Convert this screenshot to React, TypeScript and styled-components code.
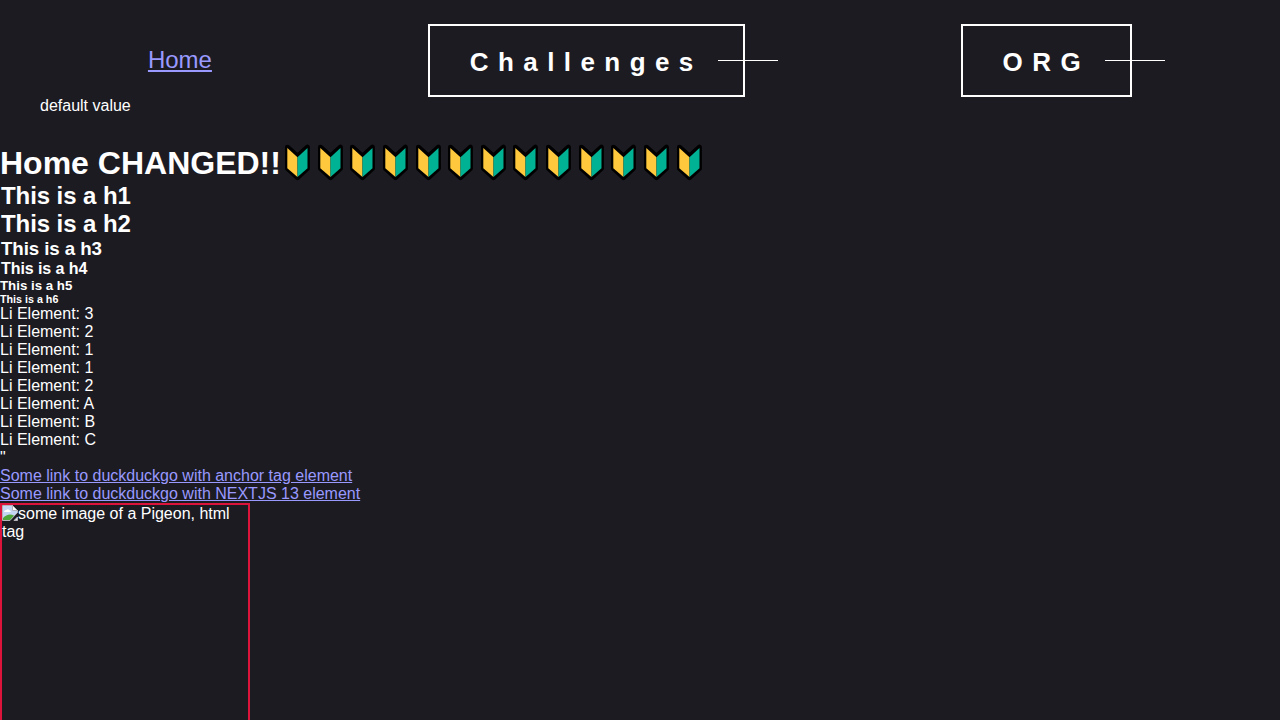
import React from "react";
import styled, { createGlobalStyle } from "styled-components";

const GlobalStyle = createGlobalStyle`
  * { box-sizing: border-box; margin: 0; padding: 0; }
  html, body { height: 100%; overflow: hidden; }
  body {
    background: #1c1b22;
    color: #fff;
    font-family: "Liberation Sans", Arial, sans-serif;
    font-size: 16px;
    line-height: 18px;
  }
`;

const Nav = styled.nav`
  display: flex;
  justify-content: space-around;
  align-items: center;
  padding: 24px 40px 0;
`;

const Link = styled.a<{ $large?: boolean }>`
  color: #9999ff;
  text-decoration: underline;
  font-size: ${(p) => (p.$large ? "24px" : "16px")};
  line-height: ${(p) => (p.$large ? "27px" : "18px")};
  padding-bottom: ${(p) => (p.$large ? "2px" : "0")};
`;

const NavBox = styled.div`
  position: relative;
  border: 2px solid #fff;
  padding: 22px 40px 18px;
  font-size: 26px;
  line-height: 29px;
  font-weight: 700;
  letter-spacing: 9.42px;

  &::after {
    content: "";
    position: absolute;
    top: 34px;
    right: -35px;
    width: 60px;
    height: 1px;
    background: #fff;
  }
`;

const ContextValue = styled.p`
  padding-left: 40px;
`;

const Title = styled.h1`
  display: flex;
  align-items: center;
  height: 37px;
  margin-top: 30px;
  font-size: 32px;
  line-height: 37px;
`;

const Badges = styled.span`
  display: flex;
  padding-left: 2px;
`;

const BadgeIcon = styled.svg`
  display: block;
  flex: none;
  width: 32.67px;
  height: 37px;
  overflow: visible;
`;

const Heading = styled.div<{ $size: number; $line: number; $indent: number; $gap: number; $track: number }>`
  font-weight: 700;
  font-size: ${(p) => p.$size}px;
  line-height: ${(p) => p.$line}px;
  padding-left: ${(p) => p.$indent}px;
  margin-bottom: ${(p) => p.$gap}px;
  letter-spacing: ${(p) => p.$track}px;
`;

const List = styled.ul`
  list-style: none;
`;

const Links = styled.div`
  display: flex;
  flex-direction: column;
  align-items: flex-start;
`;

const MissingImage = styled.div`
  width: 250px;
  height: 250px;
  border: 2px solid crimson;
`;

const BrokenIcon = styled.svg`
  width: 16px;
  height: 16px;
  vertical-align: -2px;
`;

const Beginner = () => (
  <BadgeIcon viewBox="0 0 32.67 37">
    <path
      d="M4.500 2.200 L14.500 11 L24.400 2.200 V23.500 L14.500 32.700 L4.500 23.500 Z"
      fill="#000"
      stroke="#000"
      strokeWidth="5"
      strokeLinejoin="round"
    />
    <path d="M4.300 2.900 L14.500 12.200 V32.100 L4.300 23.300 Z" fill="#ffc83d" />
    <path d="M24.500 2.900 L14.500 12.200 V32.100 L24.500 23.300 Z" fill="#00b294" />
  </BadgeIcon>
);

const headings = [
  { size: 24, line: 28, indent: 1, gap: 0, track: -0.08 },
  { size: 24, line: 28, indent: 1, gap: 0, track: -0.08 },
  { size: 18.72, line: 21, indent: 1, gap: 1, track: -0.08 },
  { size: 16, line: 18, indent: 1, gap: 0, track: -0.08 },
  { size: 13.28, line: 15, indent: 0, gap: 0, track: 0 },
  { size: 10.72, line: 12, indent: 0, gap: 0, track: 0 },
];

const items = ["3", "2", "1", "1", "2", "A", "B", "C"];

export default function App() {
  return (
    <>
      <GlobalStyle />
      <Nav>
        <Link $large>Home</Link>
        <NavBox>Challenges</NavBox>
        <NavBox>ORG</NavBox>
      </Nav>
      <ContextValue>default value</ContextValue>
      <main>
        <Title>
          Home CHANGED!!
          <Badges>
            {Array.from({ length: 13 }, (_, i) => (
              <Beginner key={i} />
            ))}
          </Badges>
        </Title>
        {headings.map((h, i) => (
          <Heading
            key={i}
            as={`h${i + 1}` as "h1"}
            $size={h.size}
            $line={h.line}
            $indent={h.indent}
            $gap={h.gap}
            $track={h.track}
          >
            This is a h{i + 1}
          </Heading>
        ))}
        <List>
          {items.map((item, i) => (
            <li key={i}>Li Element: {item}</li>
          ))}
        </List>
        <p>"</p>
        <Links>
          <Link>Some link to duckduckgo with anchor tag element</Link>
          <Link>Some link to duckduckgo with NEXTJS 13 element</Link>
        </Links>
        <MissingImage>
          <BrokenIcon viewBox="0 0 16 16">
            <path d="M.5 .5 H10.500 L15.500 5.500 V7.500 L8 15.500 H.5 Z" fill="#c5d6f4" stroke="#b4b4b8" />
            <path d="M2 7 Q2.200 5 4.200 5 Q6 3.200 7.400 5.200 Q9 5.500 8.800 7 Z" fill="#fff" />
            <path d="M1 15 V13 Q6 7.500 12 10.500 L8 15 Z" fill="#50a63a" />
            <path d="M10.500 .5 V5.500 H15.500 Z" fill="#fff" stroke="#b4b4b8" />
            <path d="M16 8 V11 L11.500 16 H8.500 Z" fill="#1c1b22" />
            <path d="M12 15.500 L15.500 12 V15.500 Z" fill="#dce4f2" stroke="#b4b4b8" />
          </BrokenIcon>
          some image of a Pigeon, html tag
        </MissingImage>
      </main>
    </>
  );
}
